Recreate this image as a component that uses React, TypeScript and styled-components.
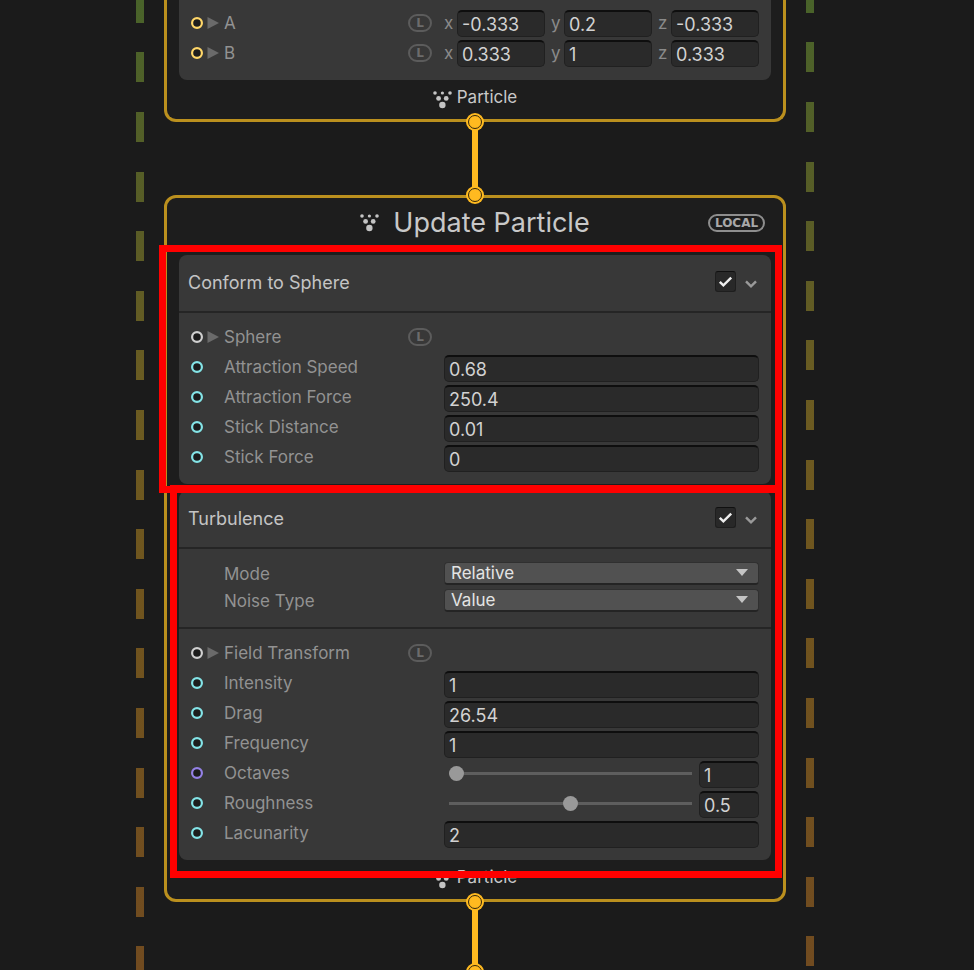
import React, { useId, useState } from "react";
import styled, { createGlobalStyle } from "styled-components";

const GlobalStyle = createGlobalStyle`
  *, *::before, *::after { box-sizing: border-box; }
  html, body { margin: 0; background: #1b1b1b; }
  body { font-family: Inter, "Liberation Sans", sans-serif; font-size: 17px; color: #929292; }
  button, input, select { font: inherit; color: inherit; margin: 0; }
`;

const colors = {
  float: "#84e4e7",
  int: "#9481e6",
  vector: "#ffd769",
  struct: "#d0d0d0",
  edge: "#ffba20",
};

/* ---------- page ---------- */

const Canvas = styled.main`
  display: flex;
  height: 100vh;
  overflow: hidden;
  padding: 0 160px 0 136px;
`;

const dashes = `linear-gradient(
  #000 30px, transparent 30px 60px,
  #000 60px 90px, transparent 90px 120px,
  #000 120px 150px, transparent 150px 179px,
  #000 179px 209px, transparent 209px 239px,
  #000 239px 269px, transparent 269px
)`;

const Rail = styled.div<{ $shift: number }>`
  flex: 0 0 8px;
  background: linear-gradient(#49632a, #5a5c26 24%, #6b5c22 40%, #70551e 60%, #714b20);
  mask-image: ${dashes};
  mask-size: 8px 298px;
  mask-position: 0 ${(p) => p.$shift}px;
`;

const Graph = styled.div`
  flex: 1;
  min-width: 0;
  display: flex;
  flex-direction: column;
  padding: 0 20px;
`;

/* ---------- contexts ---------- */

const Context = styled.section<{ $cut?: boolean }>`
  flex: none;
  padding: 0 12px;
  background: #1d1d1d;
  border: 3px solid #bb901e;
  border-radius: 12px;
  ${(p) => p.$cut && "border-top: 0; border-top-left-radius: 0; border-top-right-radius: 0;"}
`;

const ContextHeader = styled.header`
  display: grid;
  grid-template-columns: 1fr auto 1fr;
  align-items: center;
  height: 57px;
  padding: 0 6px 8px;
`;

const ContextTitle = styled.h1`
  grid-column: 2;
  display: flex;
  align-items: center;
  gap: 13px;
  margin: 0;
  font-size: 27px;
  line-height: 32px;
  font-weight: 400;
  color: #c8c8c8;
`;

const SpaceButton = styled.button`
  justify-self: end;
  width: 57px;
  height: 18px;
  padding: 0;
  border: 2px solid #8e8e8e;
  border-radius: 9px;
  background: none;
  color: #a8a8a8;
  font: 700 12px/14px "DejaVu Sans", sans-serif;
`;

const ContextFooter = styled.footer`
  display: flex;
  justify-content: center;
  gap: 4px;
  height: 39px;
  padding-top: 7px;
  line-height: 20px;
  color: #c8c8c8;
  svg { margin-top: 3px; }
`;

const BlockStack = styled.div`
  display: flex;
  flex-direction: column;
  gap: 7px;
`;

/* ---------- edges between contexts ---------- */

const Link = styled.div<{ $length: number }>`
  position: relative;
  flex: none;
  align-self: center;
  width: 6px;
  height: ${(p) => p.$length}px;
  background: ${colors.edge};
`;

const Anchor = styled.svg<{ $end?: boolean }>`
  position: absolute;
  left: -6px;
  ${(p) => (p.$end ? "bottom: -9px;" : "top: -9px;")}
`;

/* ---------- blocks ---------- */

const BlockFrame = styled.article<{ $cut?: boolean }>`
  position: relative;
  background: #383838;
  border-radius: ${(p) => (p.$cut ? "0 0 8px 8px" : "8px")};
`;

const Highlight = styled.div<{ $inset: string }>`
  position: absolute;
  inset: ${(p) => p.$inset};
  z-index: 2;
  border: 7px solid #ff0000;
  pointer-events: none;
`;

const BlockHeader = styled.header`
  display: flex;
  align-items: center;
  height: 56px;
  padding: 0 14px 0 9px;
`;

const BlockTitle = styled.h2`
  flex: 1;
  margin: 0;
  font-size: 18px;
  line-height: 20px;
  font-weight: 400;
  color: #c4c4c4;
`;

const Toggle = styled.label`
  position: relative;
  display: flex;
  margin: 0 9px 4px 0;
  svg { position: absolute; inset: 0; pointer-events: none; }
  input:not(:checked) + svg { display: none; }
`;

const ToggleBox = styled.input`
  appearance: none;
  width: 21px;
  height: 21px;
  border: 1px solid #1e1e1e;
  border-top-color: #101010;
  border-radius: 3px;
  background: #282828;
`;

const FoldButton = styled.button`
  display: flex;
  width: 12px;
  padding: 2px 0 0;
  border: 0;
  background: none;
`;

const Settings = styled.div`
  border-top: 2px solid #252525;
  padding: 11px 0 13px;
`;

const Properties = styled.div<{ $cut?: boolean }>`
  ${(p) => (p.$cut ? "padding: 8px 0 12px;" : "border-top: 2px solid #252525; padding: 9px 0 12px;")}
`;

const Row = styled.div<{ $setting?: boolean }>`
  display: grid;
  grid-template-columns: 33px 184px 36px minmax(0, 1fr);
  align-items: center;
  height: ${(p) => (p.$setting ? 27 : 30)}px;
  padding: 0 12px;
`;

const PortCell = styled.span`
  display: flex;
  align-items: center;
  gap: 4px;
`;

const Expander = styled.button`
  display: flex;
  padding: 0;
  border: 0;
  background: none;
`;

const Name = styled.label`
  line-height: 20px;
  color: #929292;
  white-space: nowrap;
`;

const LocalButton = styled.button`
  width: 24px;
  height: 18px;
  padding: 0;
  border: 2px solid #5c5c5c;
  border-radius: 9px;
  background: none;
  color: #6c6c6c;
  font: 700 12px/14px "DejaVu Sans", sans-serif;
`;

const Controls = styled.div`
  grid-column: 4;
  display: flex;
  align-items: center;
`;

const Field = styled.input`
  width: 100%;
  min-width: 0;
  height: 27px;
  margin-top: 3px;
  padding: 0 4px;
  border: 1px solid #202020;
  border-top: 2px solid #0e0e0e;
  border-radius: 5px;
  outline: 0;
  background: #2a2a2a;
  color: #d2d2d2;
  font-size: 18px;
`;

const VectorControls = styled(Controls)`
  gap: 6px;
  padding-bottom: 1px;
  ${Field} { margin-top: 1px; padding-top: 2px; }
`;

const Axis = styled.label`
  flex: 1;
  display: flex;
  align-items: center;
  min-width: 0;
  line-height: 20px;
  color: #8a8a8a;
`;

const AxisName = styled.span`
  flex: 0 0 13px;
`;

const Slider = styled.input`
  appearance: none;
  flex: 1;
  min-width: 0;
  height: 15px;
  margin: 0 7px 0 5px;
  background: linear-gradient(#5e5e5e, #5e5e5e) center / 100% 3px no-repeat;
  &::-webkit-slider-thumb {
    appearance: none;
    width: 15px;
    height: 15px;
    border-radius: 50%;
    background: #999;
  }
`;

const SliderValue = styled.div`
  flex: 0 0 60px;
  display: flex;
`;

const SelectBox = styled.div`
  position: relative;
  flex: 1;
  display: flex;
  svg { position: absolute; right: 11px; top: 7px; pointer-events: none; }
`;

const Select = styled.select`
  appearance: none;
  width: 100%;
  height: 23px;
  padding: 0 6px;
  border: 1px solid #303030;
  border-bottom: 2px solid #242424;
  border-radius: 4px;
  background: #515151;
  color: #e4e4e4;
  line-height: 20px;
`;

/* ---------- drawings ---------- */

const ParticleIcon = () => (
  <svg width="20" height="19" viewBox="0 0 20 19" fill="#c4c4c4" aria-hidden="true">
    <circle cx="2" cy="3" r="1.8" />
    <circle cx="9.4" cy="3" r="1.6" />
    <circle cx="17" cy="3" r="1.8" />
    <circle cx="5.6" cy="8.4" r="2.4" />
    <circle cx="13.2" cy="8.4" r="2.4" />
    <circle cx="9.4" cy="15" r="3.2" />
  </svg>
);

const FlowAnchor = ({ end }: { end?: boolean }) => (
  <Anchor $end={end} width="18" height="18" viewBox="0 0 18 18" aria-hidden="true">
    <circle cx="9" cy="9" r="9" fill={colors.edge} />
    <circle cx="9" cy="9" r="6.5" fill="none" stroke="#33270c" strokeWidth="1" />
  </Anchor>
);

const Port = ({ color }: { color: string }) => (
  <svg width="12" height="12" viewBox="0 0 12 12" aria-hidden="true">
    <circle cx="6" cy="6" r="4.9" fill="#1c1c1c" stroke={color} strokeWidth="2.2" />
  </svg>
);

const FoldArrow = () => (
  <svg width="12" height="12" viewBox="0 0 12 12" aria-hidden="true">
    <path d="M0.5 0L12 6L0.5 12Z" fill="#6a6a6a" />
  </svg>
);

const Check = () => (
  <svg width="21" height="21" viewBox="0 0 21 21" fill="none" aria-hidden="true">
    <path d="M4.8 10.8L8.4 14.4L16.2 6.6" stroke="#eeeeee" strokeWidth="2.4" />
  </svg>
);

const Chevron = () => (
  <svg width="12" height="8" viewBox="0 0 12 8" fill="none" aria-hidden="true">
    <path d="M1 1.3L6 6.3L11 1.3" stroke="#9a9a9a" strokeWidth="2.4" />
  </svg>
);

/* ---------- parts ---------- */

type PropertyProps = {
  name: string;
  color: string;
  expandable?: boolean;
  children?: (id: string) => React.ReactNode;
};

function Property({ name, color, expandable, children }: PropertyProps) {
  const id = useId();
  return (
    <Row>
      <PortCell>
        <Port color={color} />
        {expandable && (
          <Expander type="button" aria-label={`Expand ${name}`}>
            <FoldArrow />
          </Expander>
        )}
      </PortCell>
      <Name as={expandable ? "span" : "label"} {...(expandable ? {} : { htmlFor: id })}>
        {name}
      </Name>
      {expandable && <LocalButton type="button" aria-label={`${name} space: L`}>L</LocalButton>}
      {children?.(id)}
    </Row>
  );
}

const FloatProperty = ({ name, value }: { name: string; value: string }) => (
  <Property name={name} color={colors.float}>
    {(id) => (
      <Controls>
        <Field id={id} defaultValue={value} />
      </Controls>
    )}
  </Property>
);

const VectorProperty = ({ name, value }: { name: string; value: string[] }) => (
  <Property name={name} color={colors.vector} expandable>
    {() => (
      <VectorControls>
        {["x", "y", "z"].map((axis, i) => (
          <Axis key={axis}>
            <AxisName>{axis}</AxisName>
            <Field defaultValue={value[i]} />
          </Axis>
        ))}
      </VectorControls>
    )}
  </Property>
);

type SliderProps = { name: string; color: string; min: number; max: number; step: number; initial: number };

function SliderProperty({ name, color, min, max, step, initial }: SliderProps) {
  const [value, setValue] = useState(String(initial));
  return (
    <Property name={name} color={color}>
      {(id) => (
        <Controls>
          <Slider
            id={id}
            type="range"
            min={min}
            max={max}
            step={step}
            value={Number(value) || 0}
            onChange={(e) => setValue(e.target.value)}
          />
          <SliderValue>
            <Field aria-label={`${name} value`} value={value} onChange={(e) => setValue(e.target.value)} />
          </SliderValue>
        </Controls>
      )}
    </Property>
  );
}

function Setting({ name, options }: { name: string; options: string[] }) {
  const id = useId();
  return (
    <Row $setting>
      <span />
      <Name htmlFor={id}>{name}</Name>
      <Controls>
        <SelectBox>
          <Select id={id} defaultValue={options[0]}>
            {options.map((o) => (
              <option key={o}>{o}</option>
            ))}
          </Select>
          <svg width="12" height="7" viewBox="0 0 12 7" aria-hidden="true">
            <path d="M0 0H12L6 7Z" fill="#c4c4c4" />
          </svg>
        </SelectBox>
      </Controls>
    </Row>
  );
}

function Block({ title, highlight, children }: { title: string; highlight: string; children: React.ReactNode }) {
  return (
    <BlockFrame>
      <BlockHeader>
        <BlockTitle>{title}</BlockTitle>
        <Toggle>
          <ToggleBox type="checkbox" defaultChecked aria-label={`Enable ${title}`} />
          <Check />
        </Toggle>
        <FoldButton type="button" aria-label={`Collapse ${title}`}>
          <Chevron />
        </FoldButton>
      </BlockHeader>
      {children}
      <Highlight $inset={highlight} />
    </BlockFrame>
  );
}

const ParticleFooter = () => (
  <ContextFooter>
    <ParticleIcon />
    <span>Particle</span>
  </ContextFooter>
);

const FlowLink = ({ length }: { length: number }) => (
  <Link $length={length}>
    <FlowAnchor />
    <FlowAnchor end />
  </Link>
);

export default function App() {
  return (
    <>
      <GlobalStyle />
      <Canvas>
        <Rail $shift={-246} />
        <Graph>
          <Context $cut>
            <BlockFrame $cut>
              <Properties $cut>
                <VectorProperty name="A" value={["-0.333", "0.2", "-0.333"]} />
                <VectorProperty name="B" value={["0.333", "1", "0.333"]} />
              </Properties>
            </BlockFrame>
            <ParticleFooter />
          </Context>

          <FlowLink length={73} />

          <Context>
            <ContextHeader>
              <ContextTitle>
                <ParticleIcon />
                Update Particle
              </ContextTitle>
              <SpaceButton type="button">LOCAL</SpaceButton>
            </ContextHeader>
            <BlockStack>
              <Block title="Conform to Sphere" highlight="-10px -11px -9px -20px">
                <Properties>
                  <Property name="Sphere" color={colors.struct} expandable />
                  <FloatProperty name="Attraction Speed" value="0.68" />
                  <FloatProperty name="Attraction Force" value="250.4" />
                  <FloatProperty name="Stick Distance" value="0.01" />
                  <FloatProperty name="Stick Force" value="0" />
                </Properties>
              </Block>
              <Block title="Turbulence" highlight="-6px -11px -18px -9px">
                <Settings>
                  <Setting name="Mode" options={["Relative", "Absolute"]} />
                  <Setting name="Noise Type" options={["Value", "Perlin", "Cellular"]} />
                </Settings>
                <Properties>
                  <Property name="Field Transform" color={colors.struct} expandable />
                  <FloatProperty name="Intensity" value="1" />
                  <FloatProperty name="Drag" value="26.54" />
                  <FloatProperty name="Frequency" value="1" />
                  <SliderProperty name="Octaves" color={colors.int} min={1} max={8} step={1} initial={1} />
                  <SliderProperty name="Roughness" color={colors.float} min={0} max={1} step={0.01} initial={0.5} />
                  <FloatProperty name="Lacunarity" value="2" />
                </Properties>
              </Block>
            </BlockStack>
            <ParticleFooter />
          </Context>

          <FlowLink length={70} />
        </Graph>
        <Rail $shift={-256} />
      </Canvas>
    </>
  );
}
